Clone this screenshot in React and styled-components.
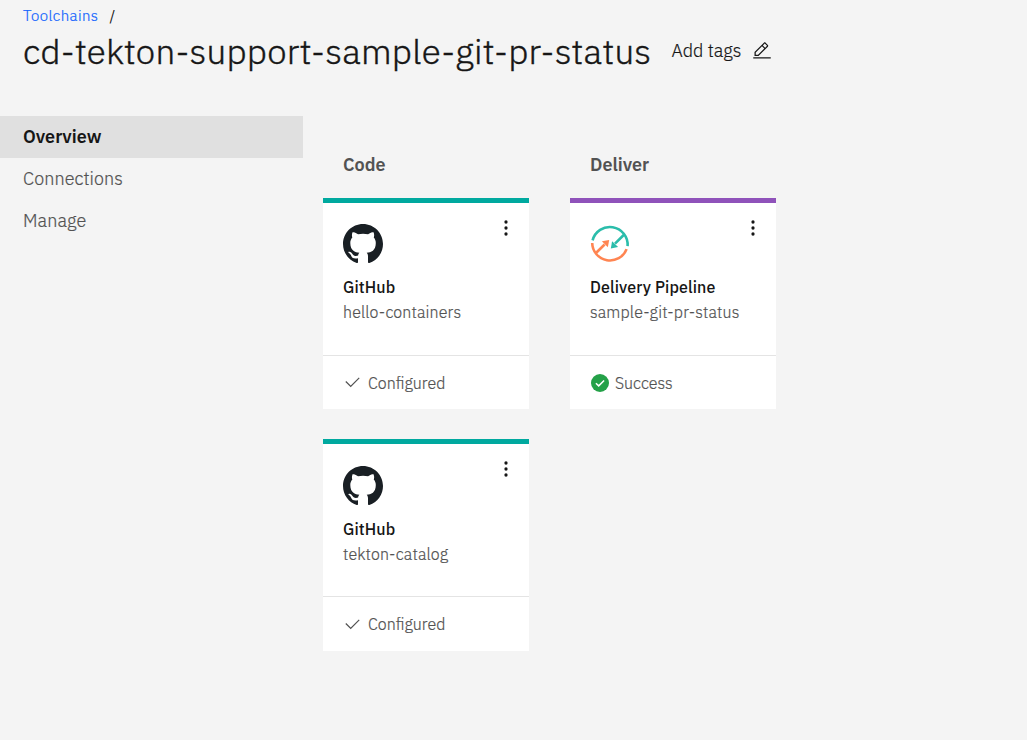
import React from 'react';
import styled, { createGlobalStyle } from 'styled-components';

const Global = createGlobalStyle`
  * { box-sizing: border-box; }
  body {
    margin: 0;
    background: #f4f4f4;
    color: #161616;
    font-family: 'IBM Plex Sans', Roboto, 'Liberation Sans', sans-serif;
  }
`;

const Page = styled.div`
  min-height: 740px;
  background: #f4f4f4;
`;

const Header = styled.header`
  height: 116px;
  padding: 6px 0 0 23px;
`;

const Breadcrumb = styled.nav`
  display: flex;
  gap: 11px;
  height: 20px;
  font-size: 15px;
  font-weight: 400;
  line-height: 20px;
`;

const Crumb = styled.a`
  color: #0f62fe;
  font-weight: 300;
  letter-spacing: 0.43px;
  text-decoration: none;
  -webkit-text-stroke: 0.2px currentColor;
`;

const TitleRow = styled.div`
  display: flex;
  align-items: center;
  height: 50px;
  white-space: nowrap;
`;

const Title = styled.h1`
  width: 648.5px;
  margin: 0;
  font-size: 35px;
  font-weight: 300;
  line-height: 50px;
  letter-spacing: 0.27px;
  -webkit-text-stroke: 0.4px currentColor;
`;

const TagButton = styled.button`
  display: flex;
  align-items: center;
  gap: 11px;
  padding: 0;
  border: 0;
  background: none;
  color: #161616;
  font: 300 18px/24px 'IBM Plex Sans', Roboto, sans-serif;
  -webkit-text-stroke: 0.2px currentColor;
`;

const Body = styled.div`
  display: flex;
  align-items: flex-start;
`;

const Sidebar = styled.nav`
  display: flex;
  flex-direction: column;
  width: 303px;
`;

const NavItem = styled.a`
  height: 42px;
  padding-left: 23px;
  background: ${(p) => (p.$active ? '#e0e0e0' : 'transparent')};
  color: ${(p) => (p.$active ? '#161616' : '#525252')};
  font-size: 18px;
  font-weight: ${(p) => (p.$active ? 600 : 300)};
  line-height: 42px;
  letter-spacing: ${(p) => (p.$active ? 0 : 0.08)}px;
  -webkit-text-stroke: ${(p) => (p.$active ? 0 : 0.2)}px currentColor;
`;

const Board = styled.main`
  display: flex;
  gap: 41px;
  padding: 34px 0 0 20px;
`;

const Column = styled.section`
  display: flex;
  flex-direction: column;
  width: 206px;
`;

const ColumnTitle = styled.h2`
  height: 48px;
  margin: 0;
  padding-left: 20px;
  color: #525252;
  font-size: 18px;
  font-weight: 600;
  line-height: 30px;
`;

const CardList = styled.div`
  display: flex;
  flex-direction: column;
  gap: 30px;
`;

const Card = styled.article`
  display: flex;
  flex-direction: column;
  height: 211.4px;
  border-top: 5px solid ${(p) => p.$accent};
  background: #fff;
`;

const CardBody = styled.div`
  height: 152px;
  padding: 21.2px 14px 0 20px;
`;

const CardTop = styled.div`
  display: flex;
  justify-content: space-between;
  height: 50px;
`;

const MenuButton = styled.button`
  display: flex;
  width: 18px;
  height: 18px;
  margin-top: -5.2px;
  padding: 0;
  border: 0;
  background: none;
`;

const CardName = styled.h3`
  margin: 0;
  font-size: 16px;
  font-weight: 500;
  line-height: 26px;
  letter-spacing: 0.12px;
`;

const CardDetail = styled.p`
  margin: 0;
  color: #525252;
  font-size: 16px;
  font-weight: 300;
  line-height: 24px;
  letter-spacing: 0.14px;
  -webkit-text-stroke: 0.2px currentColor;
`;

const CardStatus = styled.footer`
  display: flex;
  flex: 1;
  align-items: center;
  gap: ${(p) => p.$gap}px;
  padding: 0 0 0 20px;
  border-top: 1px solid #e4e4e4;
  color: #525252;
  font-size: 16px;
  font-weight: 300;
  line-height: 24px;
  -webkit-text-stroke: 0.2px currentColor;
`;

const Icon = styled.svg`
  display: block;
  flex: none;
`;

const EditIcon = () => (
  <Icon width="20" height="20" viewBox="0 0 32 32" fill="#161616">
    <path d="M2 26h28v2H2zM25.4 9c.8-.8.8-2 0-2.8l-3.6-3.6c-.8-.8-2-.8-2.8 0l-15 15V24h6.4l15-15zm-5-5L24 7.6l-3 3L17.4 7l3-3zM6 22v-3.6l10-10 3.6 3.6-10 10H6z" />
  </Icon>
);

const OverflowIcon = () => (
  <Icon width="18" height="18" viewBox="0 0 18 18" fill="#161616">
    <circle cx="9" cy="3" r="1.65" />
    <circle cx="9" cy="9" r="1.65" />
    <circle cx="9" cy="15" r="1.65" />
  </Icon>
);

const GitHubIcon = () => (
  <Icon width="40" height="40" viewBox="0 0 16 16" fill="#191f24">
    <path fillRule="evenodd" d="M8 0C3.58 0 0 3.58 0 8c0 3.54 2.29 6.53 5.47 7.59.4.07.55-.17.55-.38 0-.19-.01-.82-.01-1.49-2.01.37-2.53-.49-2.69-.94-.09-.23-.48-.94-.82-1.13-.28-.15-.68-.52-.01-.53.63-.01 1.08.58 1.23.82.72 1.21 1.87.87 2.33.66.07-.52.28-.87.51-1.07-1.78-.2-3.64-.89-3.64-3.95 0-.87.31-1.59.82-2.15-.08-.2-.36-1.02.08-2.12 0 0 .67-.21 2.2.82.64-.18 1.32-.27 2-.27s1.36.09 2 .27c1.53-1.04 2.2-.82 2.2-.82.44 1.1.16 1.92.08 2.12.51.56.82 1.27.82 2.15 0 3.07-1.87 3.75-3.65 3.95.29.25.54.73.54 1.48 0 1.07-.01 1.93-.01 2.2 0 .21.15.46.55.38A8.01 8.01 0 0 0 16 8c0-4.42-3.58-8-8-8z" />
  </Icon>
);

const PipelineIcon = () => (
  <Icon width="40" height="40" viewBox="0 -0.6 40 40" fill="none" strokeWidth="2.6">
    <path d="M2.6 15.8A17.8 17.8 0 0 1 37.6 21.5M33.7 10.4L25 19.1" stroke="#2bbdab" />
    <path d="M20.8 23.8l1.3-7.2 6 5.8z" fill="#2bbdab" />
    <path d="M2.2 18.4a17.8 17.8 0 0 0 34.4 6.1M5.2 29.1l9.4-9.2" stroke="#ff8552" />
    <path d="M19.2 15.3l-7.3 1.4 5.9 6z" fill="#ff8552" />
  </Icon>
);

const CheckIcon = () => (
  <Icon width="19" height="19" viewBox="0 0 32 32" fill="#525252">
    <path d="M13 24L4 15l1.4-1.4 7.6 7.6L26.6 7.6 28 9z" />
  </Icon>
);

const SuccessIcon = () => (
  <Icon width="20" height="20" viewBox="0 0 20 20">
    <circle cx="10" cy="10" r="9" fill="#24a148" />
    <path d="M5.9 10.2l2.8 2.7 5.4-5.4" fill="none" stroke="#fff" strokeWidth="1.5" />
  </Icon>
);

const columns = [
  {
    title: 'Code',
    accent: '#00a99f',
    cards: [
      { name: 'GitHub', detail: 'hello-containers', status: 'Configured' },
      { name: 'GitHub', detail: 'tekton-catalog', status: 'Configured' },
    ],
  },
  {
    title: 'Deliver',
    accent: '#8f52ba',
    cards: [
      { name: 'Delivery Pipeline', detail: 'sample-git-pr-status', status: 'Success' },
    ],
  },
];

const ToolCard = ({ card, accent }) => {
  const success = card.status === 'Success';
  return (
    <Card $accent={accent}>
      <CardBody>
        <CardTop>
          {card.name === 'GitHub' ? <GitHubIcon /> : <PipelineIcon />}
          <MenuButton aria-label="Options"><OverflowIcon /></MenuButton>
        </CardTop>
        <CardName>{card.name}</CardName>
        <CardDetail>{card.detail}</CardDetail>
      </CardBody>
      <CardStatus $gap={success ? 5 : 6}>
        {success ? <SuccessIcon /> : <CheckIcon />}
        <span>{card.status}</span>
      </CardStatus>
    </Card>
  );
};

export default function App() {
  return (
    <Page>
      <Global />
      <Header>
        <Breadcrumb>
          <Crumb>Toolchains</Crumb>
          <span>/</span>
        </Breadcrumb>
        <TitleRow>
          <Title>cd-tekton-support-sample-git-pr-status</Title>
          <TagButton>
            Add tags
            <EditIcon />
          </TagButton>
        </TitleRow>
      </Header>
      <Body>
        <Sidebar>
          <NavItem $active>Overview</NavItem>
          <NavItem>Connections</NavItem>
          <NavItem>Manage</NavItem>
        </Sidebar>
        <Board>
          {columns.map((column) => (
            <Column key={column.title}>
              <ColumnTitle>{column.title}</ColumnTitle>
              <CardList>
                {column.cards.map((card) => (
                  <ToolCard key={card.detail} card={card} accent={column.accent} />
                ))}
              </CardList>
            </Column>
          ))}
        </Board>
      </Body>
    </Page>
  );
}
